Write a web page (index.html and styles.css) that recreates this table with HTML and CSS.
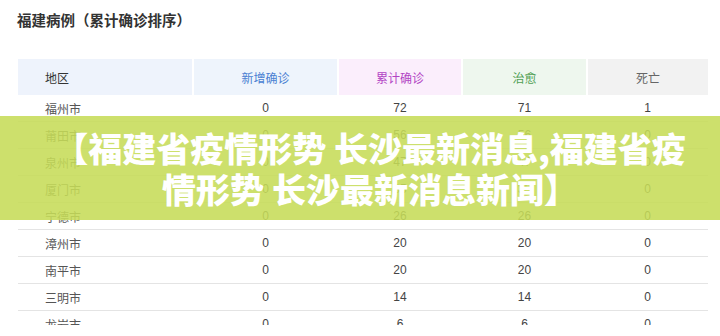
FILE: index.html
```html
<!DOCTYPE html>
<html lang="zh-CN">
<head>
<meta charset="utf-8">
<title>福建病例</title>
<link rel="stylesheet" href="styles.css">
</head>
<body>
<div class="page">
  <h2 class="title">福建病例（累计确诊排序）</h2>
  <table class="cases">
    <colgroup>
      <col class="c1"><col class="c2"><col class="c3"><col class="c4"><col class="c5">
    </colgroup>
    <thead>
      <tr>
        <th class="h-area">地区</th>
        <th class="h-new">新增确诊</th>
        <th class="h-total">累计确诊</th>
        <th class="h-cured">治愈</th>
        <th class="h-dead">死亡</th>
      </tr>
    </thead>
    <tbody>
      <tr><td>福州市</td><td>0</td><td>72</td><td>71</td><td>1</td></tr>
      <tr><td>莆田市</td><td>0</td><td>56</td><td>56</td><td>0</td></tr>
      <tr><td>泉州市</td><td>0</td><td>47</td><td>47</td><td>0</td></tr>
      <tr><td>厦门市</td><td>0</td><td>35</td><td>35</td><td>0</td></tr>
      <tr><td>宁德市</td><td>0</td><td>26</td><td>26</td><td>0</td></tr>
      <tr><td>漳州市</td><td>0</td><td>20</td><td>20</td><td>0</td></tr>
      <tr><td>南平市</td><td>0</td><td>20</td><td>20</td><td>0</td></tr>
      <tr><td>三明市</td><td>0</td><td>14</td><td>14</td><td>0</td></tr>
      <tr><td>龙岩市</td><td>0</td><td>6</td><td>6</td><td>0</td></tr>
    </tbody>
  </table>
  <div class="banner">
    <h1 class="banner-text">【福建省疫情形势 长沙最新消息,福建省疫<br>情形势 长沙最新消息新闻】</h1>
  </div>
</div>
</body>
</html>
```
FILE: styles.css
```css
html, body {
  margin: 0;
  padding: 0;
  background: #fff;
}

.page {
  position: relative;
  height: 325px;
  overflow: hidden;
  padding: 0 12px 0 18px;
  font-family: "Liberation Sans", "Noto Sans CJK SC", sans-serif;
  color: #444;
}

.title {
  margin: 0;
  padding-top: 11px;
  font-size: 14.5px;
  line-height: 18px;
  font-weight: bold;
  color: #333;
  font-family: "Noto Sans CJK SC", sans-serif;
  margin-left: -1px;
}

.cases {
  margin-top: 30px;
  width: 690px;
  border-collapse: collapse;
  table-layout: fixed;
  font-size: 12px;
}

.c1 { width: 175px; }
.c2 { width: 145px; }
.c3 { width: 124px; }
.c4 { width: 125px; }
.c5 { width: 121px; }

.cases th {
  height: 36px;
  padding: 0;
  font-weight: normal;
  text-align: center;
  border-right: 2px solid #fff;
  font-family: "Noto Sans CJK SC", sans-serif;
}

.cases th:last-child { border-right: 0; }

.cases .h-area {
  text-align: left;
  padding-left: 27px;
  background: #eef3fc;
  color: #333;
}
.h-new { background: #eef4fc; color: #4a7fd2; }
.h-total { background: #fbeefc; color: #b244c4; }
.h-cured { background: #eef7ee; color: #4f9f53; }
.h-dead { background: #f2f2f2; color: #666; }

.cases td {
  height: 26px;
  padding: 0;
  text-align: center;
  border-bottom: 1px solid #e4e4e4;
  color: #444;
}

.cases td:first-child {
  text-align: left;
  padding-left: 27px;
  color: #555;
  font-family: "Noto Sans CJK SC", sans-serif;
}

.banner {
  position: absolute;
  left: 0;
  right: 0;
  top: 116px;
  height: 104px;
  background: rgba(198, 220, 88, 0.88);
  display: flex;
  align-items: center;
  justify-content: center;
  padding-left: 20px;
}

.banner-text {
  margin: 0;
  font-family: "Noto Sans CJK SC", sans-serif;
  font-weight: 900;
  font-size: 34px;
  line-height: 41px;
  color: #fff;
  text-align: center;
  white-space: nowrap;
}
```
